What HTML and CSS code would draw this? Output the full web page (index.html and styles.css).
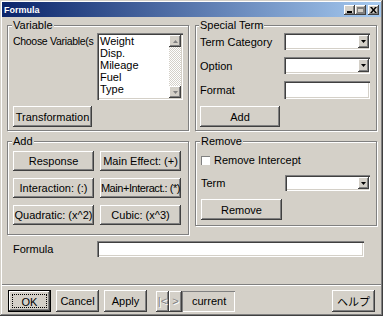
FILE: index.html
```html
<!DOCTYPE html>
<html lang="ja">
<head>
    <meta charset="UTF-8">
    <title>Formula</title>
    <link rel="stylesheet" href="styles.css">
</head>
<body>
    <div class="window">
        <div class="titlebar">
            <span class="title">Formula</span>
            <div class="caption-buttons">
                <span class="cap-btn"><svg width="6" height="6" viewBox="0 0 6 6"><rect x="0" y="4" width="5" height="2" fill="#000"/></svg></span>
                <span class="cap-btn"><svg width="7" height="6" viewBox="0 0 7 6"><rect x="0.5" y="0.5" width="6" height="5" fill="none" stroke="#808080"/><rect x="0" y="0" width="7" height="2" fill="#808080"/></svg></span>
                <span class="cap-btn close"><svg width="7" height="6" viewBox="0 0 7 6"><path d="M0 0h2l1.5 2 1.5-2h2l-2.5 3 2.5 3h-2l-1.5-2-1.5 2h-2l2.5-3z" fill="#000"/></svg></span>
            </div>
        </div>

        <div class="client">
            <div class="group-row">
                <fieldset class="group group-variable">
                    <legend>Variable</legend>
                    <div class="var-top">
                        <span class="clip-label">Choose Variable(s</span>
                        <div class="listbox">
                            <ul class="items">
                                <li>Weight</li>
                                <li>Disp.</li>
                                <li>Mileage</li>
                                <li>Fuel</li>
                                <li>Type</li>
                            </ul>
                            <div class="vscroll">
                                <span class="sb-btn"><svg width="5" height="3" viewBox="0 0 5 3"><path d="M2.5 0L5 3H0z" fill="#808080"/></svg></span>
                                <span class="sb-track"></span>
                                <span class="sb-btn"><svg width="5" height="3" viewBox="0 0 5 3"><path d="M0 0h5L2.5 3z" fill="#808080"/></svg></span>
                            </div>
                        </div>
                    </div>
                    <button class="btn btn-transform">Transformation</button>
                </fieldset>

                <fieldset class="group group-special">
                    <legend>Special Term</legend>
                    <div class="form-rows">
                        <div class="form-row">
                            <span class="row-label">Term Category</span>
                            <div class="combo"><span class="combo-field"></span><span class="combo-btn"><svg width="5" height="3" viewBox="0 0 5 3"><path d="M0 0h5L2.5 3z" fill="#000"/></svg></span></div>
                        </div>
                        <div class="form-row">
                            <span class="row-label">Option</span>
                            <div class="combo"><span class="combo-field"></span><span class="combo-btn"><svg width="5" height="3" viewBox="0 0 5 3"><path d="M0 0h5L2.5 3z" fill="#000"/></svg></span></div>
                        </div>
                        <div class="form-row">
                            <span class="row-label">Format</span>
                            <span class="textbox textbox-format"></span>
                        </div>
                        <button class="btn btn-action">Add</button>
                    </div>
                </fieldset>
            </div>

            <div class="group-row group-row-second">
                <fieldset class="group group-add">
                    <legend>Add</legend>
                    <div class="add-grid">
                        <button class="btn">Response</button>
                        <button class="btn">Main Effect: (+)</button>
                        <button class="btn">Interaction: (:)</button>
                        <button class="btn btn-tight">Main+Interact.: (*)</button>
                        <button class="btn">Quadratic: (x^2)</button>
                        <button class="btn">Cubic: (x^3)</button>
                    </div>
                </fieldset>

                <fieldset class="group group-remove">
                    <legend>Remove</legend>
                    <label class="check-row"><span class="checkbox"></span>Remove Intercept</label>
                    <div class="form-row term-row">
                        <span class="row-label">Term</span>
                        <div class="combo combo-term"><span class="combo-field"></span><span class="combo-btn"><svg width="5" height="3" viewBox="0 0 5 3"><path d="M0 0h5L2.5 3z" fill="#000"/></svg></span></div>
                    </div>
                    <button class="btn btn-action btn-remove">Remove</button>
                </fieldset>
            </div>

            <div class="formula-row">
                <span class="row-label">Formula</span>
                <span class="textbox textbox-formula"></span>
            </div>

            <div class="footer">
                <button class="btn btn-footer btn-default"><span class="focus">OK</span></button>
                <button class="btn btn-footer">Cancel</button>
                <button class="btn btn-footer">Apply</button>
                <div class="nav">
                    <button class="btn btn-nav" disabled>|&lt;</button>
                    <button class="btn btn-nav" disabled>&gt;</button>
                    <span class="current">current</span>
                </div>
                <button class="btn btn-footer btn-help">ヘルプ</button>
            </div>
        </div>
    </div>
</body>
</html>
```

FILE: styles.css
```css
body {
    margin: 0;
    font-family: "Liberation Sans", "Noto Sans CJK JP", sans-serif;
    font-size: 11px;
    color: #000;
    background: #d4d0c8;
}
.window {
    width: 383px;
    height: 316px;
    box-sizing: border-box;
    padding: 2px;
    background: #d4d0c8;
    box-shadow: inset -1px -1px #404040, inset 1px 1px #d4d0c8, inset -2px -2px #808080, inset 2px 2px #fff;
    display: flex;
    flex-direction: column;
}
.titlebar {
    height: 15px;
    flex: none;
    display: flex;
    align-items: center;
    justify-content: space-between;
    padding: 0 2px 0 2px;
    background: linear-gradient(to right, #0a246a, #a6caf0);
}
.title {
    color: #fff;
    font-size: 9px;
    font-weight: bold;
}
.caption-buttons {
    display: flex;
    align-items: center;
}
.cap-btn {
    width: 11px;
    height: 10px;
    display: flex;
    align-items: center;
    justify-content: center;
    background: #d4d0c8;
    box-shadow: inset -1px -1px #404040, inset 1px 1px #fff, inset -2px -2px #808080;
}
.cap-btn.close {
    margin-left: 2px;
}

.client {
    flex: 1;
    display: flex;
    flex-direction: column;
    padding: 2px 0 0 0;
}
.group-row {
    display: flex;
    gap: 6px;
    padding-left: 5px;
}
.group-row-second {
    margin-top: 4px;
}
.group {
    margin: 0;
    padding: 0 5px 3px 5px;
    min-width: 0;
    box-sizing: border-box;
    width: 182px;
    border: 1px solid #808080;
    box-shadow: 1px 1px 0 #fff, inset 1px 1px 0 #fff;
}
.group legend {
    padding: 0 1px;
    margin-left: -1px;
    line-height: 13px;
    background: #d4d0c8;
}

.var-top {
    display: flex;
    margin-top: 1px;
}
.clip-label {
    width: 84px;
    flex: none;
    overflow: hidden;
    white-space: nowrap;
    padding-top: 2px;
    font-size: 10.5px;
    letter-spacing: -0.3px;
}
.listbox {
    width: 88px;
    height: 67px;
    box-sizing: border-box;
    padding: 2px;
    display: flex;
    background: #fff;
    box-shadow: inset 1px 1px #808080, inset 2px 2px #404040, inset -1px -1px #fff, inset -2px -2px #d4d0c8;
}
.items {
    list-style: none;
    margin: 0;
    padding: 0 0 0 1px;
    flex: 1;
    line-height: 12px;
}
.vscroll {
    width: 12px;
    display: flex;
    flex-direction: column;
}
.sb-btn {
    height: 12px;
    display: flex;
    align-items: center;
    justify-content: center;
    background: #d4d0c8;
    box-shadow: inset -1px -1px #404040, inset 1px 1px #fff, inset -2px -2px #808080;
}
.sb-track {
    flex: 1;
    background: repeating-conic-gradient(#fff 0 25%, #d4d0c8 0 50%) 0 0 / 2px 2px;
}

.btn {
    font: inherit;
    color: #000;
    background: #d4d0c8;
    border: 0;
    padding: 0;
    box-shadow: inset -1px -1px #404040, inset 1px 1px #fff, inset -2px -2px #808080, inset 2px 2px #d4d0c8;
}
.btn-transform {
    width: 79px;
    height: 21px;
    margin-top: 6px;
    display: block;
}
.btn-action {
    width: 80px;
    height: 21px;
}

.group-special {
    padding-left: 4px;
}
.form-rows {
    display: flex;
    flex-direction: column;
    gap: 7px;
    margin-top: 1px;
}
.form-row {
    display: flex;
    align-items: center;
}
.row-label {
    width: 84px;
    flex: none;
}
.combo {
    width: 86px;
    height: 17px;
    box-sizing: border-box;
    padding: 2px 1px 2px 2px;
    display: flex;
    background: #fff;
    box-shadow: inset 1px 1px #808080, inset 2px 2px #404040, inset -1px -1px #fff, inset -2px -2px #d4d0c8;
}
.combo-field {
    flex: 1;
}
.combo-btn {
    width: 11px;
    display: flex;
    align-items: center;
    justify-content: center;
    background: #d4d0c8;
    box-shadow: inset -1px -1px #404040, inset 1px 1px #fff, inset -2px -2px #808080;
}
.textbox {
    display: block;
    height: 18px;
    box-sizing: border-box;
    background: #fff;
    box-shadow: inset 1px 1px #808080, inset 2px 2px #404040, inset -1px -1px #fff, inset -2px -2px #d4d0c8;
}
.textbox-format {
    width: 86px;
}

.group-add {
    padding-bottom: 9px;
}
.add-grid {
    display: grid;
    grid-template-columns: 81px 81px;
    grid-auto-rows: 20px;
    column-gap: 6px;
    row-gap: 7px;
    margin-top: 3px;
}
.btn-tight {
    white-space: nowrap;
    letter-spacing: -0.45px;
}

.group-remove {
    width: 182px;
    align-self: flex-start;
    padding-bottom: 5px;
}
.check-row {
    display: flex;
    align-items: center;
    height: 14px;
    margin-top: 5px;
}
.checkbox {
    width: 9px;
    height: 9px;
    margin-right: 4px;
    background: #fff;
    box-shadow: inset 1px 1px #808080, inset -1px -1px #fff;
}
.term-row {
    margin-top: 8px;
}
.combo-term {
    width: 85px;
    height: 16px;
}
.btn-remove {
    display: block;
    margin-top: 8px;
    width: 81px;
}

.formula-row {
    display: flex;
    align-items: center;
    padding-left: 11px;
    margin-top: 6px;
}
.textbox-formula {
    width: 267px;
    height: 16px;
}

.footer {
    margin-top: auto;
    display: flex;
    align-items: center;
    gap: 5px;
    padding: 5px 6px 2px 6px;
    border-top: 1px solid #808080;
    box-shadow: inset 0 1px #fff;
}
.btn-footer {
    width: 43px;
    height: 22px;
}
.btn-default {
    box-shadow: inset 0 0 0 1px #000, inset -2px -2px #404040, inset 2px 2px #fff, inset -3px -3px #808080;
    display: flex;
    align-items: center;
    justify-content: center;
}
.focus {
    display: block;
    width: 35px;
    height: 14px;
    line-height: 14px;
    box-sizing: border-box;
    border: 1px dotted #000;
}
.nav {
    display: flex;
    margin-left: 4px;
}
.btn-nav {
    width: 13px;
    height: 21px;
    color: #808080;
    text-shadow: 1px 1px #fff;
}
.current {
    width: 53px;
    height: 21px;
    box-sizing: border-box;
    line-height: 21px;
    padding-left: 10px;
    box-shadow: inset 1px 1px #808080, inset -1px -1px #fff;
}
.btn-help {
    margin-left: auto;
}
```
